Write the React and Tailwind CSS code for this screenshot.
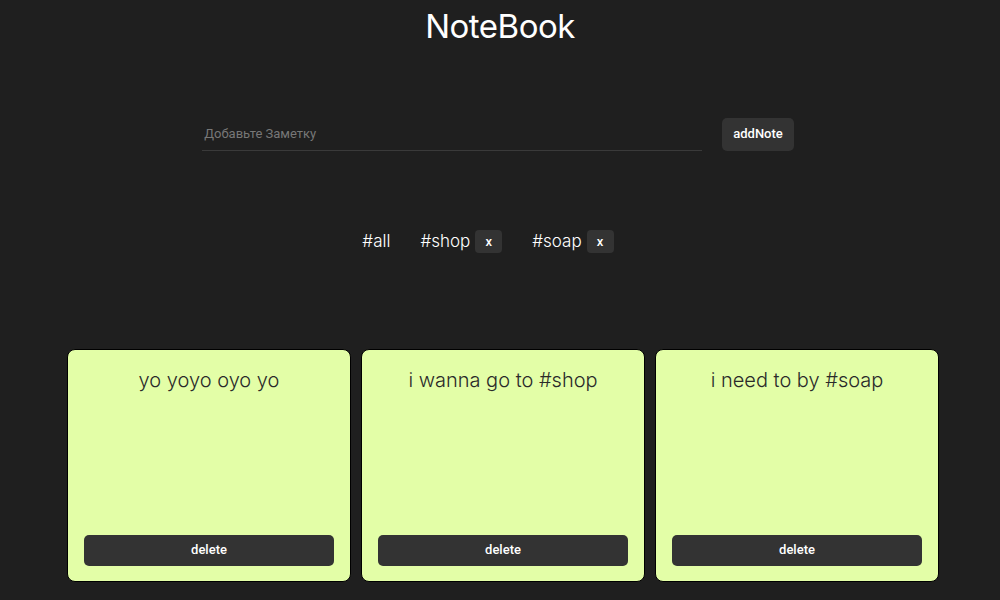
const notes = [
  { id: 1, text: 'yo yoyo oyo yo' },
  { id: 2, text: 'i wanna go to #shop' },
  { id: 3, text: 'i need to by #soap' },
];

const tags = [
  { name: '#all', removable: false },
  { name: '#shop', removable: true },
  { name: '#soap', removable: true },
];

export default function App() {
  return (
    <div className="min-h-[600px] w-full bg-[#1f1f1f] overflow-hidden">
      <h1 className="pt-[4px] text-center text-[33px] leading-[44px] text-white font-['Inter',sans-serif] font-normal tracking-[-0.5px]">
        NoteBook
      </h1>

      <div className="mt-[69px] flex items-center justify-center gap-[20px] pr-[4px]">
        <input
          placeholder="Добавьте Заметку"
          className="w-[500px] h-[34px] bg-transparent border-b border-[#3a3a3a] px-[2px] text-[13px] text-white placeholder:text-[#777] outline-none font-['Roboto',sans-serif]"
        />
        <button className="h-[33px] px-[11px] rounded-[5px] bg-[#333333] text-white text-[13px] font-medium font-['Roboto',sans-serif]">
          addNote
        </button>
      </div>

      <div className="mt-[78px] flex items-center justify-center gap-[30px] pr-[24px] font-['Inter',sans-serif] font-light text-[17px] text-white">
        {tags.map((t) => (
          <div key={t.name} className="flex items-center gap-[5px]">
            <span>{t.name}</span>
            {t.removable && (
              <span className="flex h-[23px] w-[27px] items-center justify-center rounded-[4px] bg-[#333333] text-[13px] font-medium font-['Roboto',sans-serif]">
                x
              </span>
            )}
          </div>
        ))}
      </div>

      <div className="mt-[94px] flex justify-center gap-[10px] pl-[6px]">
        {notes.map((n) => (
          <div
            key={n.id}
            className="flex h-[233px] w-[284px] flex-col rounded-[8px] border border-black bg-[#e3fea7] px-[16px] pb-[15px] pt-[16px]"
          >
            <p className="text-center text-[20px] leading-[28px] text-[#2a2a2a] font-['Inter',sans-serif] font-light">
              {n.text}
            </p>
            <button className="mt-auto h-[31px] w-full rounded-[5px] bg-[#333333] text-white text-[13px] font-medium font-['Roboto',sans-serif]">
              delete
            </button>
          </div>
        ))}
      </div>
    </div>
  );
}
